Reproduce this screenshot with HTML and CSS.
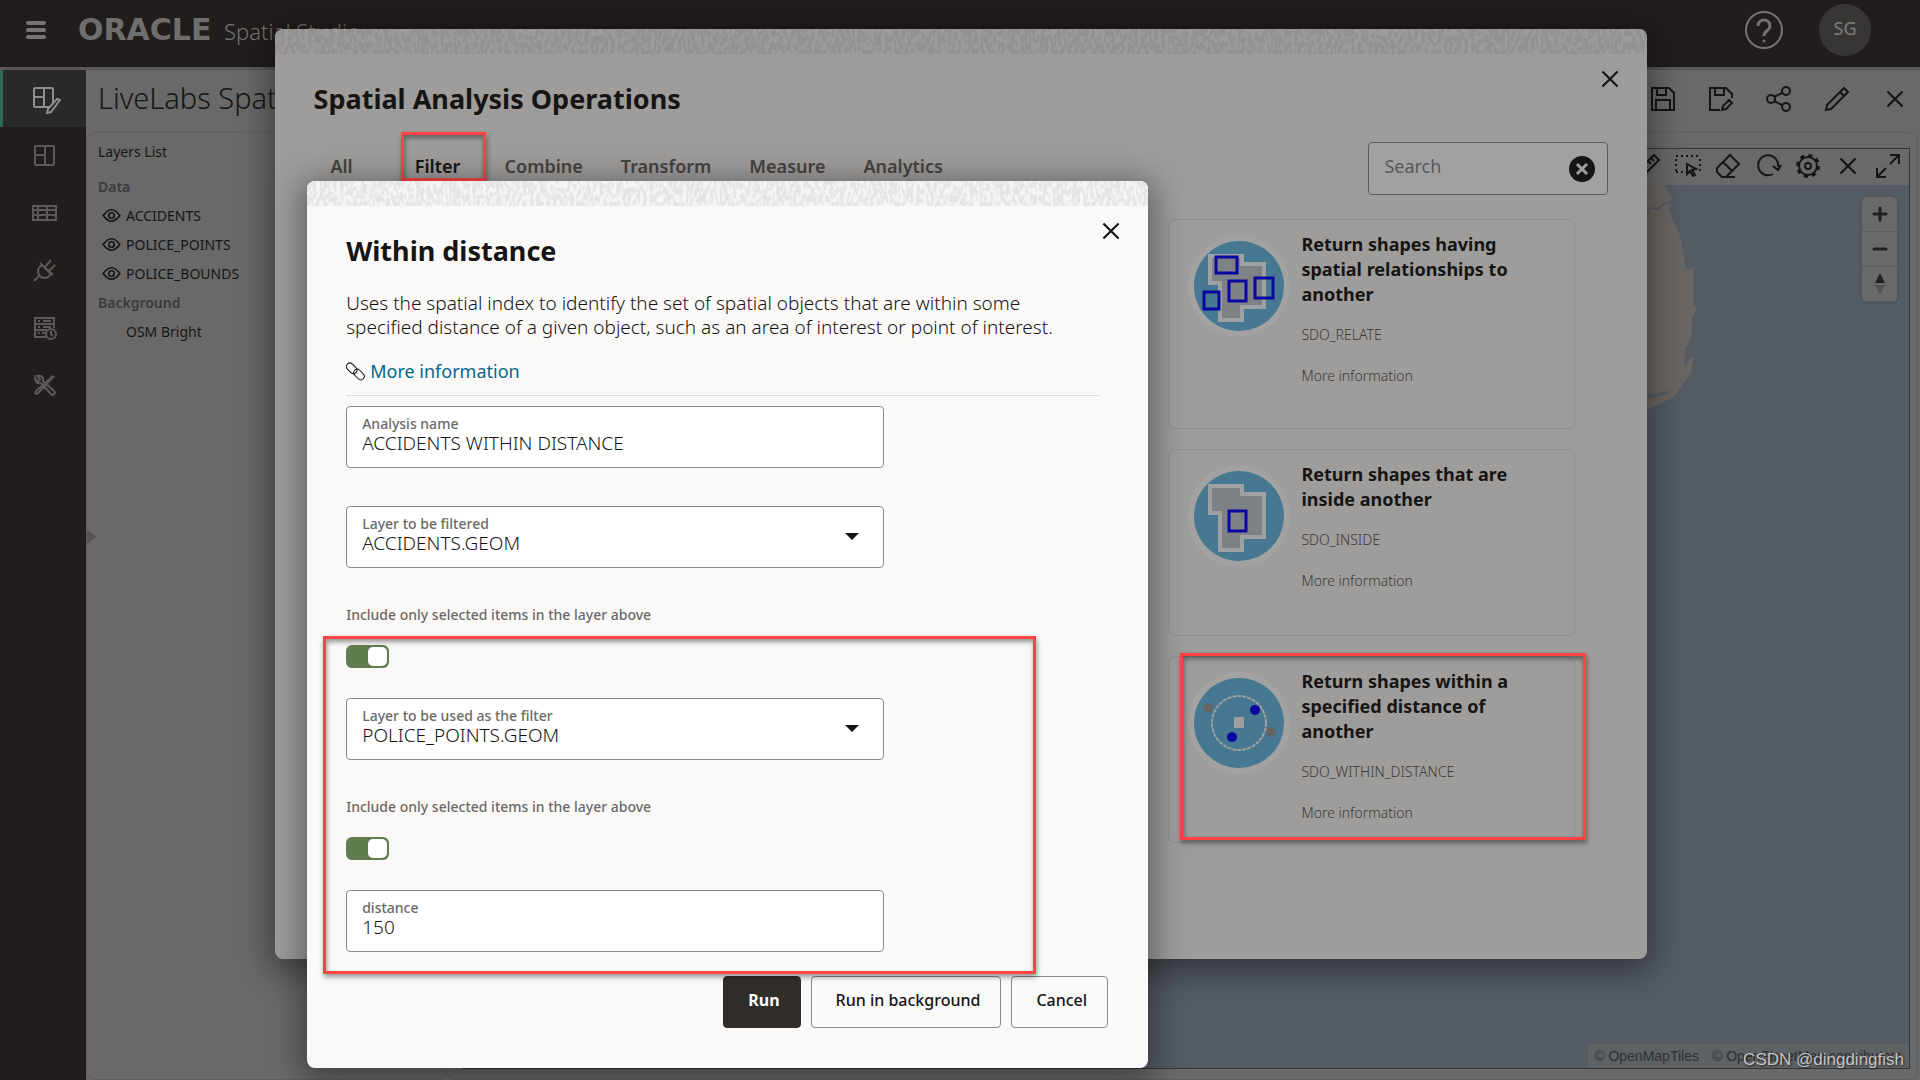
FILE: index.html
```html
<!DOCTYPE html>
<html lang="en">
<head>
    <meta charset="UTF-8">
    <meta name="viewport" content="width=device-width, initial-scale=1.0">
    <title>Spatial Studio</title>
    <link rel="stylesheet" href="styles.css">
</head>
<body>
    <!-- Shared icon and texture definitions -->
    <svg class="defs" width="0" height="0" aria-hidden="true">
        <filter id="grain" x="0" y="0" width="100%" height="100%">
            <feTurbulence type="fractalNoise" baseFrequency="0.3 0.14" numOctaves="2" seed="4"/>
            <feColorMatrix values="0 0 0 0 1  0 0 0 0 1  0 0 0 0 1  6 0 0 0 -2.600"/>
        </filter>
        <symbol id="close" viewBox="0 0 24 24"><path d="M5 5l14 14M19 5L5 19"/></symbol>
        <symbol id="eye" viewBox="0 0 24 24"><path d="M1.500 12Q12-2.500 22.500 12Q12 26.500 1.500 12z"/><circle cx="12" cy="12" r="3.500"/></symbol>
    </svg>

    <header class="topbar">
        <button class="icon-btn menu" aria-label="Menu">
            <svg width="20" height="20" viewBox="0 0 20 20"><path d="M2 3h16M2 10h16M2 17h16" stroke-width="4" stroke-linecap="round"/></svg>
        </button>
        <span class="brand">ORACLE</span>
        <span class="product">Spatial Studio</span>
        <button class="icon-btn help" aria-label="Help">
            <svg width="40" height="40" viewBox="0 0 40 40"><circle cx="20" cy="20" r="18" stroke-width="2"/><path d="M14 16c0-8 12-8 12 0 0 5-6 4-6 10" stroke-width="3"/><circle cx="20" cy="31" r="1.500" fill="currentColor" stroke="none"/></svg>
        </button>
        <button class="avatar">SG</button>
    </header>

    <div class="workspace">
        <nav class="sidebar">
            <a href="#" class="active" aria-label="Active project">
                <svg width="30" height="30" viewBox="0 0 30 30"><rect x="3" y="4" width="19" height="19" rx="1"/><path d="M13 4v19M3 13h10"/><path d="M29 16l-3-1-9 10-1 4 4-1z" fill="#2a2927"/></svg>
            </a>
            <a href="#" aria-label="Projects">
                <svg width="30" height="30" viewBox="0 0 30 30"><rect x="4" y="5" width="19" height="19" rx="1"/><path d="M14 5v19M4 14h10"/></svg>
            </a>
            <a href="#" aria-label="Datasets">
                <svg width="30" height="30" viewBox="0 0 30 30"><rect x="2" y="8" width="23" height="14"/><path d="M7 8v14M16 8v14M2 12h23M2 17h23"/></svg>
            </a>
            <a href="#" aria-label="Connections">
                <svg width="30" height="30" viewBox="0 0 30 30"><path d="M3 26l6-6M11 10l9 9c-3 5-8 5-11 2s-3-8 2-11zM14 12l6-7M18 16l6-6M9 8l13 12"/></svg>
            </a>
            <a href="#" aria-label="Jobs">
                <svg width="30" height="30" viewBox="0 0 30 30"><path d="M15 25H4V6h19v10M4 12h19M4 18h12M7 9h2M12 9h8M7 15h2M12 15h8M7 21h2M11 21h4"/><circle cx="20" cy="22" r="5"/><path d="M20 19v3l2 2"/></svg>
            </a>
            <a href="#" aria-label="Console">
                <svg width="30" height="30" viewBox="0 0 30 30"><path d="M23 7L7 24c-2 2-4 0-2-2L22 7M4 9c0 5 3 6 6 5l10 11c2 2 5 0 3-3L12 12c1-4-2-6-6-5l3 3-2 3z"/></svg>
            </a>
        </nav>

        <main class="project">
            <div class="project-head">
                <h1>LiveLabs Spatial</h1>
                <div class="actions">
                    <button class="icon-btn" aria-label="Save"><svg width="28" height="28" viewBox="0 0 28 28"><path d="M3 3h17l5 5v17H3zM8 3v7h9V3M7 25V15h14v10"/></svg></button>
                    <button class="icon-btn" aria-label="Save as"><svg width="28" height="28" viewBox="0 0 28 28"><path d="M13 25H3V3h16l6 6v4M8 3v7h9V3M15 25l1-4 6-6 3 3-6 6z"/></svg></button>
                    <button class="icon-btn" aria-label="Share"><svg width="28" height="28" viewBox="0 0 28 28"><circle cx="6" cy="14" r="4"/><circle cx="21" cy="6" r="4"/><circle cx="21" cy="22" r="4"/><path d="M9 12l8-4M9 16l8 4"/></svg></button>
                    <button class="icon-btn" aria-label="Edit"><svg width="28" height="28" viewBox="0 0 28 28"><path d="M3 25l1-5L21 3l4 4L8 24zM17 7l4 4"/></svg></button>
                    <button class="icon-btn" aria-label="Close project"><svg width="26" height="26"><use href="#close"/></svg></button>
                </div>
            </div>
            <div class="panels">
                <section class="layers">
                    <h2>Layers List</h2>
                    <h3>Data</h3>
                    <ul>
                        <li><svg width="19" height="19"><use href="#eye"/></svg>ACCIDENTS</li>
                        <li><svg width="19" height="19"><use href="#eye"/></svg>POLICE_POINTS</li>
                        <li><svg width="19" height="19"><use href="#eye"/></svg>POLICE_BOUNDS</li>
                    </ul>
                    <h3>Background</h3>
                    <ul>
                        <li class="no-icon">OSM Bright</li>
                    </ul>
                    <span class="expander"></span>
                </section>
                <section class="map-panel">
                    <div class="map-frame">
                        <div class="map-tools">
                            <button class="icon-btn" aria-label="Measure"><svg width="28" height="28" viewBox="0 0 28 28"><path d="M3 20L20 3l5 5L8 25zM10 13l3 3M14 9l3 3M17 6l3 3"/></svg></button>
                            <button class="icon-btn" aria-label="Select"><svg width="28" height="28" viewBox="0 0 28 28"><path d="M2 4h24M26 7v14M2 7v14M2 20h9" stroke-dasharray="2 3"/><path d="M13 12l9 5-4 1 3 5-2 1-3-5-3 3z"/></svg></button>
                            <button class="icon-btn" aria-label="Clear"><svg width="28" height="28" viewBox="0 0 28 28"><path d="M3 16L16 3l9 9-13 13H8l-5-5zM9 10l9 9M12 25h9"/></svg></button>
                            <button class="icon-btn" aria-label="Refresh"><svg width="28" height="28" viewBox="0 0 28 28"><path d="M19 22A10 10 0 1 1 24 15M19 14l5 4 3-5"/></svg></button>
                            <button class="icon-btn" aria-label="Settings"><svg width="28" height="28" viewBox="0 0 28 28"><circle cx="14" cy="14" r="10.500" stroke-width="3" stroke-dasharray="4 4.250"/><circle cx="14" cy="14" r="9"/><circle cx="14" cy="14" r="3"/></svg></button>
                            <button class="icon-btn" aria-label="Remove map"><svg width="26" height="26"><use href="#close"/></svg></button>
                            <button class="icon-btn" aria-label="Full screen"><svg width="28" height="28" viewBox="0 0 28 28"><path d="M16 3h9v9M25 3l-9 9M12 25H3v-9M3 25l9-9"/></svg></button>
                        </div>
                        <div class="map">
                            <svg class="land" width="300" height="260" viewBox="0 0 300 260">
                                <path class="ground" d="M56 0l7 14-3 8 2 9 9 19 3 17 3 16 4 2 3-4 1 14-1 10 1 16 3 2-5 10v12l-2 10-2 6h-2l-2 18 2 2 3-7 5-2-3 15-17 25-26 12H0V0z"/>
                                <path class="river" d="M36 25l8-2 4 1 7-5 8-3M36 28h6"/>
                                <path class="lake" d="M38 207l2 6 18-4 3-2-3-1-16 4z"/>
                            </svg>
                            <div class="map-nav">
                                <button aria-label="Zoom in"><svg width="16" height="16" viewBox="0 0 16 16"><path d="M2 8h12M8 2v12" stroke-width="3" stroke-linecap="round"/></svg></button>
                                <button aria-label="Zoom out"><svg width="16" height="16" viewBox="0 0 16 16"><path d="M2 8h12" stroke-width="3" stroke-linecap="round"/></svg></button>
                                <button aria-label="Reset north"><svg width="12" height="22" viewBox="0 0 12 22"><path d="M6 0l5 10H1z" fill="#232020" stroke="none"/><path d="M6 22l5-10H1z" fill="#535353" stroke="none"/></svg></button>
                            </div>
                            <div class="attribution"><a href="#">© OpenMapTiles</a><a href="#">© OpenStreetMap contributors</a></div>
                        </div>
                    </div>
                </section>
            </div>
        </main>
    </div>

    <section class="dialog operations" role="dialog" aria-labelledby="opsTitle">
        <svg class="strip"><rect width="100%" height="100%" filter="url(#grain)"/></svg>
        <div class="dialog-head">
            <h2 id="opsTitle">Spatial Analysis Operations</h2>
            <button class="icon-btn" aria-label="Close"><svg width="26" height="26"><use href="#close"/></svg></button>
        </div>
        <div class="filter-row">
            <ul class="tabs">
                <li><a href="#">All</a></li>
                <li class="selected"><a href="#">Filter</a></li>
                <li><a href="#">Combine</a></li>
                <li><a href="#">Transform</a></li>
                <li><a href="#">Measure</a></li>
                <li><a href="#">Analytics</a></li>
            </ul>
            <div class="search">
                <input type="text" placeholder="Search" aria-label="Search">
                <button class="icon-btn" aria-label="Clear search"><svg width="28" height="28" viewBox="0 0 28 28"><circle cx="14" cy="14" r="13" fill="#161513" stroke="none"/><path d="M9 9l10 10M19 9L9 19" stroke="#9f9f9f" stroke-width="3"/></svg></button>
            </div>
        </div>
        <div class="cards">
            <article class="card">
                <svg width="102" height="102" viewBox="0 0 102 102">
                    <circle class="ring" cx="51" cy="51" r="51"/><circle class="disc" cx="51" cy="51" r="45"/>
                    <path class="region" d="M22 21h32v8h22v43H54v13H32V48H22z"/>
                    <path class="target" d="M28 22h21v16H28zM41 46h17v20H41zM67 43h18v20H67zM16 57h15v17H16z"/>
                </svg>
                <div>
                    <h3>Return shapes having spatial relationships to another</h3>
                    <p>SDO_RELATE</p>
                    <a href="#">More information</a>
                </div>
            </article>
            <article class="card">
                <svg width="102" height="102" viewBox="0 0 102 102">
                    <circle class="ring" cx="51" cy="51" r="51"/><circle class="disc" cx="51" cy="51" r="45"/>
                    <path class="region" d="M22 21h32v8h22v43H54v13H32V48H22z"/>
                    <path class="target" d="M41 46h17v20H41z"/>
                </svg>
                <div>
                    <h3>Return shapes that are inside another</h3>
                    <p>SDO_INSIDE</p>
                    <a href="#">More information</a>
                </div>
            </article>
            <article class="card callout">
                <svg width="102" height="102" viewBox="0 0 102 102">
                    <circle class="ring" cx="51" cy="51" r="51"/><circle class="disc" cx="51" cy="51" r="45"/>
                    <circle cx="51" cy="51" r="27" fill="none" stroke="#9f9f9f" stroke-width="2" stroke-dasharray="4 1"/>
                    <rect x="46" y="45" width="10" height="11" fill="#9f9f9f"/>
                    <circle cx="20" cy="36" r="5" fill="#666"/><circle cx="83" cy="60" r="5" fill="#666"/>
                    <circle cx="67" cy="38" r="5" fill="#0a06a0"/><circle cx="44" cy="65" r="5" fill="#0a06a0"/>
                </svg>
                <div>
                    <h3>Return shapes within a specified distance of another</h3>
                    <p>SDO_WITHIN_DISTANCE</p>
                    <a href="#">More information</a>
                </div>
            </article>
        </div>
    </section>

    <section class="dialog analysis" role="dialog" aria-labelledby="analysisTitle">
        <svg class="strip"><rect width="100%" height="100%" filter="url(#grain)"/></svg>
        <div class="dialog-head">
            <h2 id="analysisTitle">Within distance</h2>
            <button class="icon-btn" aria-label="Close"><svg width="26" height="26"><use href="#close"/></svg></button>
        </div>
        <form class="analysis-body">
            <p>Uses the spatial index to identify the set of spatial objects that are within some specified distance of a given object, such as an area of interest or point of interest.</p>
            <div class="more">
                <svg width="19" height="19" viewBox="0 0 19 19"><rect x="0" y="3" width="12" height="7" rx="3.500" transform="rotate(45 6 6)"/><rect x="7" y="9" width="12" height="7" rx="3.500" transform="rotate(45 13 12.500)"/></svg>
                <a href="#">More information</a>
            </div>
            <div class="field">
                <label for="name">Analysis name</label>
                <input type="text" id="name" value="ACCIDENTS WITHIN DISTANCE">
            </div>
            <div class="field">
                <label for="layer">Layer to be filtered</label>
                <select id="layer"><option>ACCIDENTS.GEOM</option></select>
                <svg class="caret" width="14" height="7" viewBox="0 0 14 7"><path d="M0 0h14L7 7z"/></svg>
            </div>
            <label class="switch-label" for="onlySelected">Include only selected items in the layer above</label>
            <div class="callout form-part">
                <input type="checkbox" class="switch" id="onlySelected" checked>
                <div class="field">
                    <label for="filterLayer">Layer to be used as the filter</label>
                    <select id="filterLayer"><option>POLICE_POINTS.GEOM</option></select>
                    <svg class="caret" width="14" height="7" viewBox="0 0 14 7"><path d="M0 0h14L7 7z"/></svg>
                </div>
                <label class="switch-label" for="onlySelectedFilter">Include only selected items in the layer above</label>
                <input type="checkbox" class="switch" id="onlySelectedFilter" checked>
                <div class="field">
                    <label for="distance">distance</label>
                    <input type="text" id="distance" value="150">
                </div>
            </div>
            <div class="buttons">
                <button type="button" class="primary">Run</button>
                <button type="button">Run in background</button>
                <button type="button">Cancel</button>
            </div>
        </form>
    </section>

    <div class="watermark">CSDN @dingdingfish</div>
</body>
</html>
```
FILE: styles.css
```css
* {
    margin: 0;
    padding: 0;
    box-sizing: border-box;
}

body {
    font-family: "Noto Sans", "Open Sans", sans-serif;
    font-size: 18px;
    line-height: 24px;
    color: #161513;
    background: #696969;
    height: 100vh;
    display: flex;
    flex-direction: column;
    position: relative;
    overflow: hidden;
}

ul {
    list-style: none;
}

a {
    color: inherit;
    text-decoration: none;
}

button, input, select {
    font: inherit;
    color: inherit;
}

svg {
    fill: none;
    stroke: currentColor;
    stroke-width: 2;
    flex: none;
}

.defs {
    position: absolute;
}

.icon-btn {
    background: none;
    border: none;
    display: flex;
    align-items: center;
    justify-content: center;
    cursor: pointer;
}

/* Top bar */
.topbar {
    display: flex;
    align-items: center;
    height: 70px;
    padding: 0 49px 8px 26px;
    background: #211d1c;
    border-bottom: 3px solid #5a5857;
    color: #757473;
}

.brand {
    width: 146px;
    margin-left: 32px;
    font-family: "DejaVu Sans", sans-serif;
    font-weight: bold;
    font-size: 30px;
    color: #6f6e6d;
}

.product {
    font-weight: 300;
    font-size: 22px;
    padding-top: 2px;
}

.help {
    margin-left: auto;
    margin-right: 35px;
}

.avatar {
    width: 52px;
    height: 52px;
    padding-bottom: 3px;
    border: none;
    border-radius: 50%;
    background: #373635;
    color: #7d7c7b;
    font-size: 18px;
}

.workspace {
    flex: 1;
    display: flex;
    min-height: 0;
}

/* Sidebar */
.sidebar {
    width: 86px;
    background: #211d1c;
    color: #5c5a58;
}

.sidebar a {
    display: flex;
    align-items: center;
    height: 57px;
    padding-left: 31px;
}

.sidebar a.active {
    background: #2a2927;
    border-left: 3px solid #2d6858;
    padding-left: 28px;
    color: #8f8e8c;
}

/* Project area */
.project {
    flex: 1;
    display: flex;
    flex-direction: column;
    min-width: 0;
}

.project-head {
    display: flex;
    align-items: center;
    justify-content: space-between;
    height: 62px;
    padding: 0 11px 0 12px;
}

.project-head h1 {
    font-weight: 300;
    font-size: 29px;
    padding-bottom: 6px;
}

.actions {
    display: flex;
    gap: 30px;
    padding-bottom: 4px;
}

.actions .icon-btn, .map-tools .icon-btn {
    width: 28px;
}

.panels {
    flex: 1;
    display: flex;
    gap: 2px;
    padding-right: 2px;
    min-height: 0;
}

.layers {
    position: relative;
    width: 359px;
    padding: 4px 11px;
    border: 1px solid #5f5f5f;
    border-radius: 8px;
    font-size: 14px;
    line-height: 29px;
}

.layers h2 {
    font-size: 14px;
    font-weight: 400;
    margin-bottom: 6px;
}

.layers h3 {
    font-size: 14px;
    font-weight: 600;
    color: #3a3a39;
}

.layers li {
    display: flex;
    align-items: center;
    gap: 5px;
    padding-left: 4px;
}

.layers li.no-icon {
    padding-left: 28px;
}

.expander {
    position: absolute;
    left: 0;
    top: 42%;
    border: 7px solid transparent;
    border-left: 10px solid #555;
    border-right: none;
}

.map-panel {
    flex: 1;
    display: flex;
    padding: 15px 7px 10px 14px;
    border: 1px solid #5f5f5f;
    border-radius: 8px;
}

.map-frame {
    flex: 1;
    display: flex;
    flex-direction: column;
    border: 1px solid #363636;
}

.map-tools {
    display: flex;
    align-items: center;
    justify-content: flex-end;
    gap: 12px;
    height: 36px;
    padding: 0 7px 2px 0;
}

.map {
    position: relative;
    flex: 1;
    background: #545b63;
}

.land {
    position: absolute;
    top: 0;
    right: 0;
    stroke: none;
}

.ground {
    fill: #6a6664;
}

.river {
    stroke: #545b63;
}

.lake {
    fill: #545b63;
}

.map-nav {
    position: absolute;
    top: 12px;
    right: 12px;
    width: 35px;
    border-radius: 5px;
    box-shadow: 0 0 0 2px #4d555f;
    background: #696969;
    overflow: hidden;
}

.map-nav button {
    display: flex;
    align-items: center;
    justify-content: center;
    width: 100%;
    height: 35px;
    border: none;
    border-bottom: 1px solid #5c5c5c;
    background: none;
    color: #232020;
}

.attribution {
    position: absolute;
    right: 0;
    bottom: 0;
    display: flex;
    gap: 13px;
    padding: 0 7px 0 6px;
    background: #5e6265;
    color: #2f2f30;
    font-family: "Liberation Sans", Arial, sans-serif;
    font-size: 14px;
}

/* Dialogs */
.dialog {
    position: absolute;
    border-radius: 8px;
    overflow: hidden;
    box-shadow: 0 6px 32px 6px rgba(0, 0, 0, 0.4);
}

.strip {
    display: block;
    width: 100%;
    height: 25px;
    stroke: none;
}

.dialog-head {
    display: flex;
    align-items: flex-start;
    justify-content: space-between;
    padding: 12px 24px 0 39px;
}

.dialog-head h2 {
    margin-top: 16px;
    font-size: 27px;
    font-weight: 700;
    line-height: 34px;
}

.operations {
    top: 29px;
    left: 14.3%;
    right: 14.2%;
    background: #9f9d9b;
}

.operations .strip {
    background: #939190;
}

.operations .strip rect {
    opacity: 0.1;
}

.filter-row {
    display: flex;
    align-items: flex-start;
    justify-content: space-between;
    margin-top: 26px;
    padding: 0 39px 0 19px;
}

.tabs {
    display: flex;
    padding-top: 12px;
    font-weight: 600;
    color: #454442;
}

.tabs li {
    position: relative;
    min-width: 96px;
    padding: 0 19px;
    text-align: center;
}

.tabs .selected {
    color: #161513;
}

.search {
    display: flex;
    align-items: center;
    width: 240px;
    height: 53px;
    padding: 0 11px 0 15px;
    border: 1px solid #5d5c5b;
    border-radius: 4px;
    background: #a1a1a1;
}

.search input {
    flex: 1;
    min-width: 0;
    padding-bottom: 5px;
    border: none;
    background: none;
    outline: none;
}

.search input::placeholder {
    color: #5a5958;
}

.cards {
    display: grid;
    grid-template-columns: repeat(3, 1fr);
    grid-template-rows: minmax(210px, auto);
    grid-auto-rows: minmax(187px, auto);
    gap: 20px;
    padding: 24px 72px 116px 40px;
}

.card {
    position: relative;
    grid-column: 3;
    display: flex;
    gap: 11px;
    padding: 12px 50px 10px 19px;
    border: 1px solid #90908e;
    border-radius: 6px;
    font-size: 14px;
    font-weight: 300;
    line-height: 20px;
    color: #3a3937;
}

.card svg {
    margin-top: 3px;
    stroke: none;
}

.card h3 {
    margin-bottom: 18px;
    font-size: 18px;
    font-weight: 700;
    line-height: 25px;
    color: #161513;
}

.card p {
    margin-bottom: 21px;
}

.ring {
    fill: #a2a2a2;
}

.disc {
    fill: #467891;
}

.region {
    fill: #7e8284;
    stroke: #9ea0a1;
    stroke-width: 4;
}

.target {
    stroke: #0a06a0;
    stroke-width: 3;
}

.analysis {
    top: 181px;
    left: 16%;
    width: 43.8%;
    background: #fbf9f8;
}

.analysis .strip {
    background: #e7e5e4;
}

.analysis .strip rect {
    opacity: 0.6;
}

.analysis-body {
    padding: 23px 40px 40px 39px;
}

.analysis-body p {
    margin-right: 24px;
    margin-bottom: 20px;
    font-size: 19px;
    font-weight: 300;
}

.more {
    display: flex;
    align-items: center;
    gap: 5px;
    padding-bottom: 12px;
    margin: 0 9px 10px 0;
    border-bottom: 1px solid #dddbda;
}

.more svg {
    stroke-width: 1;
}

.more a {
    color: #00688c;
}

.field {
    position: relative;
    display: flex;
    flex-direction: column;
    width: 538px;
    max-width: 100%;
    height: 62px;
    margin-bottom: 38px;
    padding: 9px 15px;
    border: 1px solid #8b8a89;
    border-radius: 4px;
    background: #fff;
}

.field label, .switch-label {
    font-size: 14px;
    font-weight: 500;
    line-height: 16px;
    color: #6b6967;
}

.field input, .field select {
    appearance: none;
    height: 22px;
    font-size: 19px;
    font-weight: 300;
    line-height: 22px;
    border: none;
    background: none;
    outline: none;
}

.caret {
    position: absolute;
    right: 24px;
    top: 26px;
    fill: #161513;
    stroke: none;
}

.switch-label {
    display: block;
    line-height: 18px;
    margin-bottom: 21px;
}

.switch {
    display: block;
    appearance: none;
    position: relative;
    width: 43px;
    height: 23px;
    margin-bottom: 30px;
    border-radius: 6px;
    background: #5f7d4f;
}

.switch::after {
    content: "";
    position: absolute;
    top: 2px;
    right: 2px;
    width: 19px;
    height: 19px;
    border-radius: 5px;
    background: #fff;
}

.form-part {
    margin-bottom: 24px;
}

.form-part .field:last-child {
    margin-bottom: 0;
}

.buttons {
    display: flex;
    justify-content: flex-end;
    gap: 10px;
}

.buttons button {
    height: 52px;
    padding: 0 20px 4px 24px;
    border: 1px solid #8b8a89;
    border-radius: 4px;
    background: none;
    font-size: 16px;
    font-weight: 500;
    cursor: pointer;
}

.buttons .primary {
    background: #312d2a;
    border-color: #312d2a;
    color: #fff;
    font-weight: 700;
}

/* Red callout frames */
.callout {
    position: relative;
}

.callout::after, .tabs .selected::after {
    content: "";
    position: absolute;
    border: 3px solid #ff4343;
    box-shadow: 1px 3px 5px rgba(0, 0, 0, 0.4), inset 1px 3px 5px rgba(0, 0, 0, 0.4);
    pointer-events: none;
}

.tabs .selected::after {
    inset: -22px 0 -3px 11px;
}

.card.callout::after {
    inset: -4px -12px 2px 11px;
}

.form-part::after {
    inset: -9px 72px -22px -23px;
}

.watermark {
    position: absolute;
    right: 16px;
    bottom: 8px;
    font-family: "Liberation Sans", Arial, sans-serif;
    font-size: 17px;
    color: #c4c4c4;
    text-shadow: 1px 1px 2px #222;
}
```
